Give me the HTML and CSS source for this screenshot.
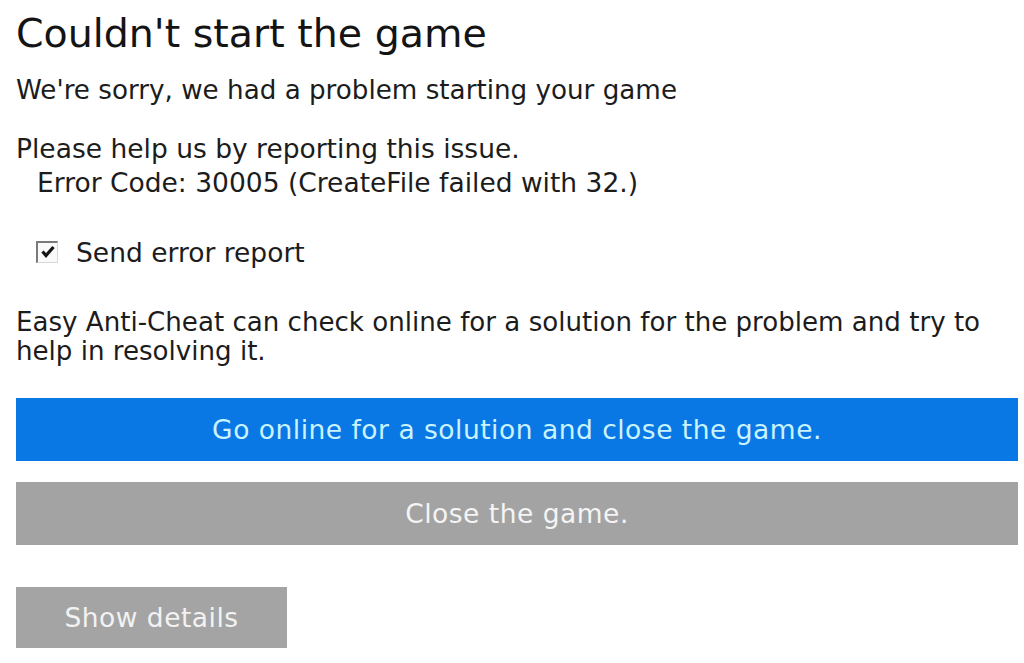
FILE: index.html
```html
<!DOCTYPE html>
<html>
<head>
<meta charset="utf-8">
<link rel="stylesheet" href="styles.css">
</head>
<body>
<main class="dialog">
  <h1 class="title">Couldn't start the game</h1>
  <p class="sorry">We're sorry, we had a problem starting your game</p>
  <div class="report">
    <p class="help">Please help us by reporting this issue.</p>
    <p class="code">Error Code: 30005 (CreateFile failed with 32.)</p>
  </div>
  <label class="check">
    <span class="box"><svg width="16" height="14" viewBox="0 0 16 14"><path d="M2.5 6.5 L6 10.5 L13.5 2" fill="none" stroke="#151515" stroke-width="3.2"/></svg></span>
    <span class="check-label">Send error report</span>
  </label>
  <p class="info">Easy Anti-Cheat can check online for a solution for the problem and try to help in resolving it.</p>
  <div class="buttons">
    <div class="btn btn-primary">Go online for a solution and close the game.</div>
    <div class="btn btn-grey">Close the game.</div>
  </div>
  <div class="btn btn-details">Show details</div>
</main>
</body>
</html>
```
FILE: styles.css
```css
html, body {
  margin: 0;
  background: #ffffff;
}
body {
  font-family: "DejaVu Sans", Verdana, sans-serif;
  color: #1c1c1c;
}
.dialog {
  display: flex;
  flex-direction: column;
  align-items: flex-start;
  padding: 9px 6px 0 16px;
}
p { margin: 0; }
.title {
  margin: 0;
  font-weight: normal;
  font-size: 39.5px;
  line-height: 48px;
  color: #141414;
}
.sorry {
  margin-top: 17px;
  font-size: 26.2px;
  line-height: 32px;
}
.report {
  margin-top: 26px;
  font-size: 26.5px;
  line-height: 34px;
}
.code {
  padding-left: 21px;
}
.check {
  margin-top: 37px;
  margin-left: 20px;
  display: flex;
  align-items: center;
  gap: 18px;
  font-size: 26.5px;
  line-height: 32px;
}
.box {
  box-sizing: border-box;
  width: 22px;
  height: 22px;
  border-top: 2px solid #7a7a7a;
  border-left: 2px solid #7a7a7a;
  border-right: 1px solid #d8d8d8;
  border-bottom: 1px solid #d8d8d8;
  background: #fafafa;
  display: flex;
  align-items: center;
  justify-content: center;
  margin-top: -3px;
}
.info {
  margin-top: 39px;
  font-size: 26.1px;
  line-height: 29px;
}
.buttons {
  align-self: stretch;
  margin-top: 32px;
  display: flex;
  flex-direction: column;
  gap: 21px;
}
.btn {
  font-size: 26.5px;
  letter-spacing: 0.5px;
  display: flex;
  align-items: center;
  justify-content: center;
  height: 63px;
}
.btn-primary {
  background: #0a78e4;
  color: #c9f3ff;
}
.btn-grey {
  background: #a3a3a3;
  color: #f4f4f4;
}
.btn-details {
  margin-top: 42px;
  width: 271px;
  height: 61px;
  background: #a4a4a4;
  color: #f2f2f2;
}
```
